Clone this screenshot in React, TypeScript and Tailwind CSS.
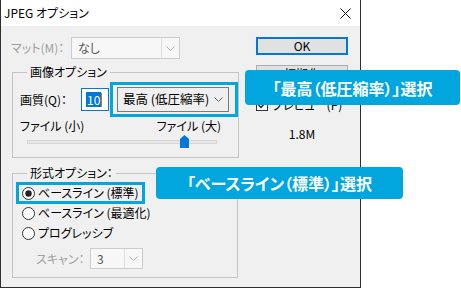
import React from "react";

const jp = "font-['Noto_Sans_CJK_JP','Noto_Sans',sans-serif] [font-feature-settings:'palt']";

function Chevron({ color = "#606060" }: { color?: string }) {
  return (
    <svg width="9" height="5" viewBox="0 0 9 5" fill="none">
      <path d="M0.5 0.5 L4.5 4.5 L8.5 0.5" stroke={color} strokeWidth="1" />
    </svg>
  );
}

function Radio({ checked }: { checked?: boolean }) {
  return (
    <svg width="13" height="13" viewBox="0 0 13 13" className="shrink-0">
      <circle cx="6.5" cy="6.5" r="6" fill="#fff" stroke="#333" strokeWidth="1" />
      {checked && <circle cx="6.5" cy="6.5" r="3.2" fill="#222" />}
    </svg>
  );
}

export default function App() {
  return (
    <div className={`relative w-[461px] h-[289px] bg-white overflow-hidden text-[12px] text-black whitespace-nowrap ${jp}`}>
      {/* Dialog window */}
      <div className="w-[361px] h-[288px] flex flex-col border-x border-b border-[#2e2e2e] bg-[#f0f0f0]">
        {/* Title bar */}
        <div className="h-[26px] bg-white flex items-center justify-between pl-[3px] pr-[9px]">
          <span className="text-[12px] leading-none">JPEG オプション</span>
          <svg width="11" height="11" viewBox="0 0 11 11">
            <path d="M0.5 0.5 L10.5 10.5 M10.5 0.5 L0.5 10.5" stroke="#111" strokeWidth="1" />
          </svg>
        </div>

        <div className="flex flex-1">
          {/* Left column */}
          <div className="w-[254px] shrink-0 flex flex-col">
            {/* Matte */}
            <div className="flex items-center mt-[11px] h-[22px]">
              <span className="w-[70px] shrink-0 pl-[10px] text-[#a0a0a0]">マット(M)：</span>
              <div className="w-[109px] h-[22px] flex border border-[#cccccc] bg-[#f7f7f7]">
                <span className="flex-1 pl-[6px] text-[#555] leading-[20px]">なし</span>
                <div className="w-[18px] border-l border-[#dddddd] flex items-center justify-center">
                  <Chevron color="#b0b0b0" />
                </div>
              </div>
            </div>

            {/* Image options group */}
            <fieldset className="ml-[11px] mt-[6px] w-[226px] h-[93px] border border-[#c4c4c4]">
              <legend className="ml-[14px] px-[3px] leading-[14px]">画像オプション</legend>
              <div className="flex items-center mt-[3px]">
                <span className="w-[68px] shrink-0 pl-[7px]">画質(Q)：</span>
                <div className="w-[28px] shrink-0 h-[23px] border border-[#0078d7] bg-white flex items-center pl-[4px]">
                  <span className="bg-[#0078d7] text-white leading-[15px] px-[1px]">10</span>
                  <span className="w-[1px] h-[14px] bg-[#e07000]" />
                </div>
                <div className="ml-[1px] shrink-0 w-[128px] h-[35px] border-[3px] border-[#00a6dd] pl-[4px] pr-[6px] py-[2px]">
                  <div className="w-[112px] h-[25px] border border-[#7a7a7a] bg-[#efefef] flex items-center justify-between pl-[5px] pr-[5px]">
                    <span className="text-[12.5px]">最高 (低圧縮率)</span>
                    <Chevron />
                  </div>
                </div>
              </div>
              <div className="flex justify-between w-[201px] ml-[7px] mt-[2px] leading-[14px]">
                <span>ファイル (小)</span>
                <span>ファイル (大)</span>
              </div>
              <div className="relative ml-[14px] mt-[2px] w-[190px] h-[13px] flex items-center">
                <div className="w-full h-[4px] bg-[#e7e7e7] border border-[#d6d6d6]" />
                <svg width="9" height="13" viewBox="0 0 9 13" className="absolute left-[153px] top-0">
                  <path d="M4.5 0 L9 4 L9 13 L0 13 L0 4 Z" fill="#0078d7" />
                </svg>
              </div>
            </fieldset>

            {/* Format options group */}
            <fieldset className="ml-[11px] mt-[8px] w-[226px] h-[112px] border border-[#c4c4c4]">
              <legend className="ml-[14px] px-[3px] leading-[14px]">形式オプション：</legend>
              <div className="ml-[3px] mt-[2px] w-[129px] h-[22px] border-[3px] border-[#00a6dd] flex items-center gap-[3px] pl-[3px]">
                <Radio checked />
                <span className="leading-[14px]">ベースライン (標準)</span>
              </div>
              <div className="ml-[9px] h-[18px] flex items-center gap-[3px]">
                <Radio />
                <span className="leading-[14px]">ベースライン (最適化)</span>
              </div>
              <div className="ml-[9px] h-[22px] flex items-center gap-[3px]">
                <Radio />
                <span className="leading-[14px]">プログレッシブ</span>
              </div>
              <div className="flex items-center mt-[4px] h-[21px]">
                <span className="w-[77px] shrink-0 pl-[23px] text-[#a0a0a0]">スキャン：</span>
                <div className="w-[53px] h-[21px] flex border border-[#cccccc] bg-[#f7f7f7]">
                  <span className="flex-1 pl-[6px] text-[#555] leading-[19px]">3</span>
                  <div className="w-[18px] border-l border-[#dddddd] flex items-center justify-center">
                    <Chevron color="#b0b0b0" />
                  </div>
                </div>
              </div>
            </fieldset>
          </div>

          {/* Right column */}
          <div className="flex flex-col pt-[11px] pl-[1px] w-[93px]">
            <div className="h-[18px] border-2 border-[#0078d7] bg-[#e1e1e1] flex items-center justify-center leading-none">
              OK
            </div>
            <div className="mt-[10px] h-[18px] border border-[#adadad] bg-[#e1e1e1] flex items-center justify-center leading-none">
              初期化
            </div>
            <div className="mt-[15px] flex items-center gap-[4px] h-[14px]">
              <svg width="12" height="12" viewBox="0 0 12 12" className="shrink-0">
                <rect x="0.5" y="0.5" width="11" height="11" fill="#fff" stroke="#333" />
                <path d="M2.5 6 L5 8.5 L9.5 3.5" stroke="#222" strokeWidth="1.5" fill="none" />
              </svg>
              <span className="leading-[14px]">プレビュー(P)</span>
            </div>
            <div className="mt-[15px] text-center leading-[14px]">1.8M</div>
          </div>
        </div>
      </div>

      {/* Callouts */}
      <div className="absolute left-[245px] top-[70px] w-[215px] h-[35px] rounded-[4px] bg-[#00a6dd] flex items-center justify-center">
        <span className="text-white font-bold text-[16px]">「最高（低圧縮率）」選択</span>
      </div>
      <div className="absolute left-[156px] top-[167px] w-[247px] h-[32px] rounded-[4px] bg-[#00a6dd] flex items-center justify-center">
        <span className="text-white font-bold text-[16px]">「ベースライン（標準）」選択</span>
      </div>
    </div>
  );
}
